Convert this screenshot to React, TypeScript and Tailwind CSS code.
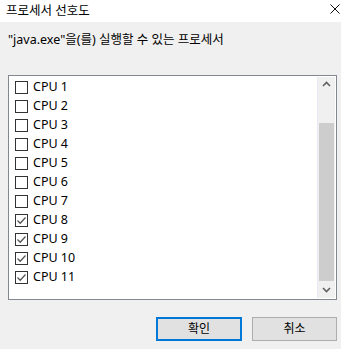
import React from 'react'

const font = { fontFamily: '"Noto Sans", "Noto Sans CJK KR", sans-serif' }

const cpus = Array.from({ length: 11 }, (_, i) => ({ id: i + 1, checked: i >= 7 }))

function Box({ checked }: { checked: boolean }) {
  return (
    <span className="w-[13px] h-[13px] border border-[#333333] bg-white flex items-center justify-center shrink-0">
      {checked && (
        <svg width="11" height="11" viewBox="0 0 11 11">
          <path d="M1.5 5.5 L4.2 8.2 L9.5 2.5" fill="none" stroke="#555" strokeWidth="1.3" />
        </svg>
      )}
    </span>
  )
}

export default function App() {
  return (
    <div className="w-[341px] h-[349px] bg-[#f0f0f0] flex flex-col text-[12px] text-black overflow-hidden" style={font}>
      <div className="h-[22px] bg-white flex items-center justify-between pl-[6px] pr-[1px] shrink-0">
        <span className="text-[12.5px] leading-none">프로세서 선호도</span>
        <svg width="10" height="10" viewBox="0 0 10 10" className="mb-[5px]">
          <path d="M0.5 0.5 L9.5 9.5 M9.5 0.5 L0.5 9.5" stroke="#111" strokeWidth="1" />
        </svg>
      </div>

      <p className="mt-[11px] ml-[8px] leading-[13px] text-[12.5px]">"java.exe"을(를) 실행할 수 있는 프로세서</p>

      <div className="mt-[29px] ml-[8px] w-[329px] h-[225px] border border-[#828790] bg-white flex">
        <div className="flex-1 pt-[2px] pl-[6px]">
          {cpus.map((c) => (
            <div key={c.id} className="h-[19px] flex items-center gap-[5px]">
              <Box checked={c.checked} />
              <span className="leading-none text-[12.5px]">CPU {c.id}</span>
            </div>
          ))}
        </div>
        <div className="w-[18px] border-l border-[#e8ebf5] bg-[#f0f0f0] flex flex-col my-[1px] mr-[1px]">
          <div className="h-[46px] flex justify-center pt-[4px]">
            <svg width="9" height="6" viewBox="0 0 9 6">
              <path d="M1 5 L4.5 1.5 L8 5" fill="none" stroke="#606060" strokeWidth="1.6" />
            </svg>
          </div>
          <div className="h-[158px] mx-[1px] bg-[#cdcdcd]" />
          <div className="flex-1 flex justify-center items-center">
            <svg width="9" height="6" viewBox="0 0 9 6">
              <path d="M1 1 L4.5 4.5 L8 1" fill="none" stroke="#606060" strokeWidth="1.6" />
            </svg>
          </div>
        </div>
      </div>

      <div className="mt-[17px] flex gap-[10px] pl-[156px]">
        <button className="w-[86px] h-[24px] border-2 border-[#0078d7] bg-[#e1e1e1] leading-none">확인</button>
        <button className="w-[85px] h-[24px] border border-[#adadad] bg-[#e1e1e1] leading-none">취소</button>
      </div>
    </div>
  )
}
